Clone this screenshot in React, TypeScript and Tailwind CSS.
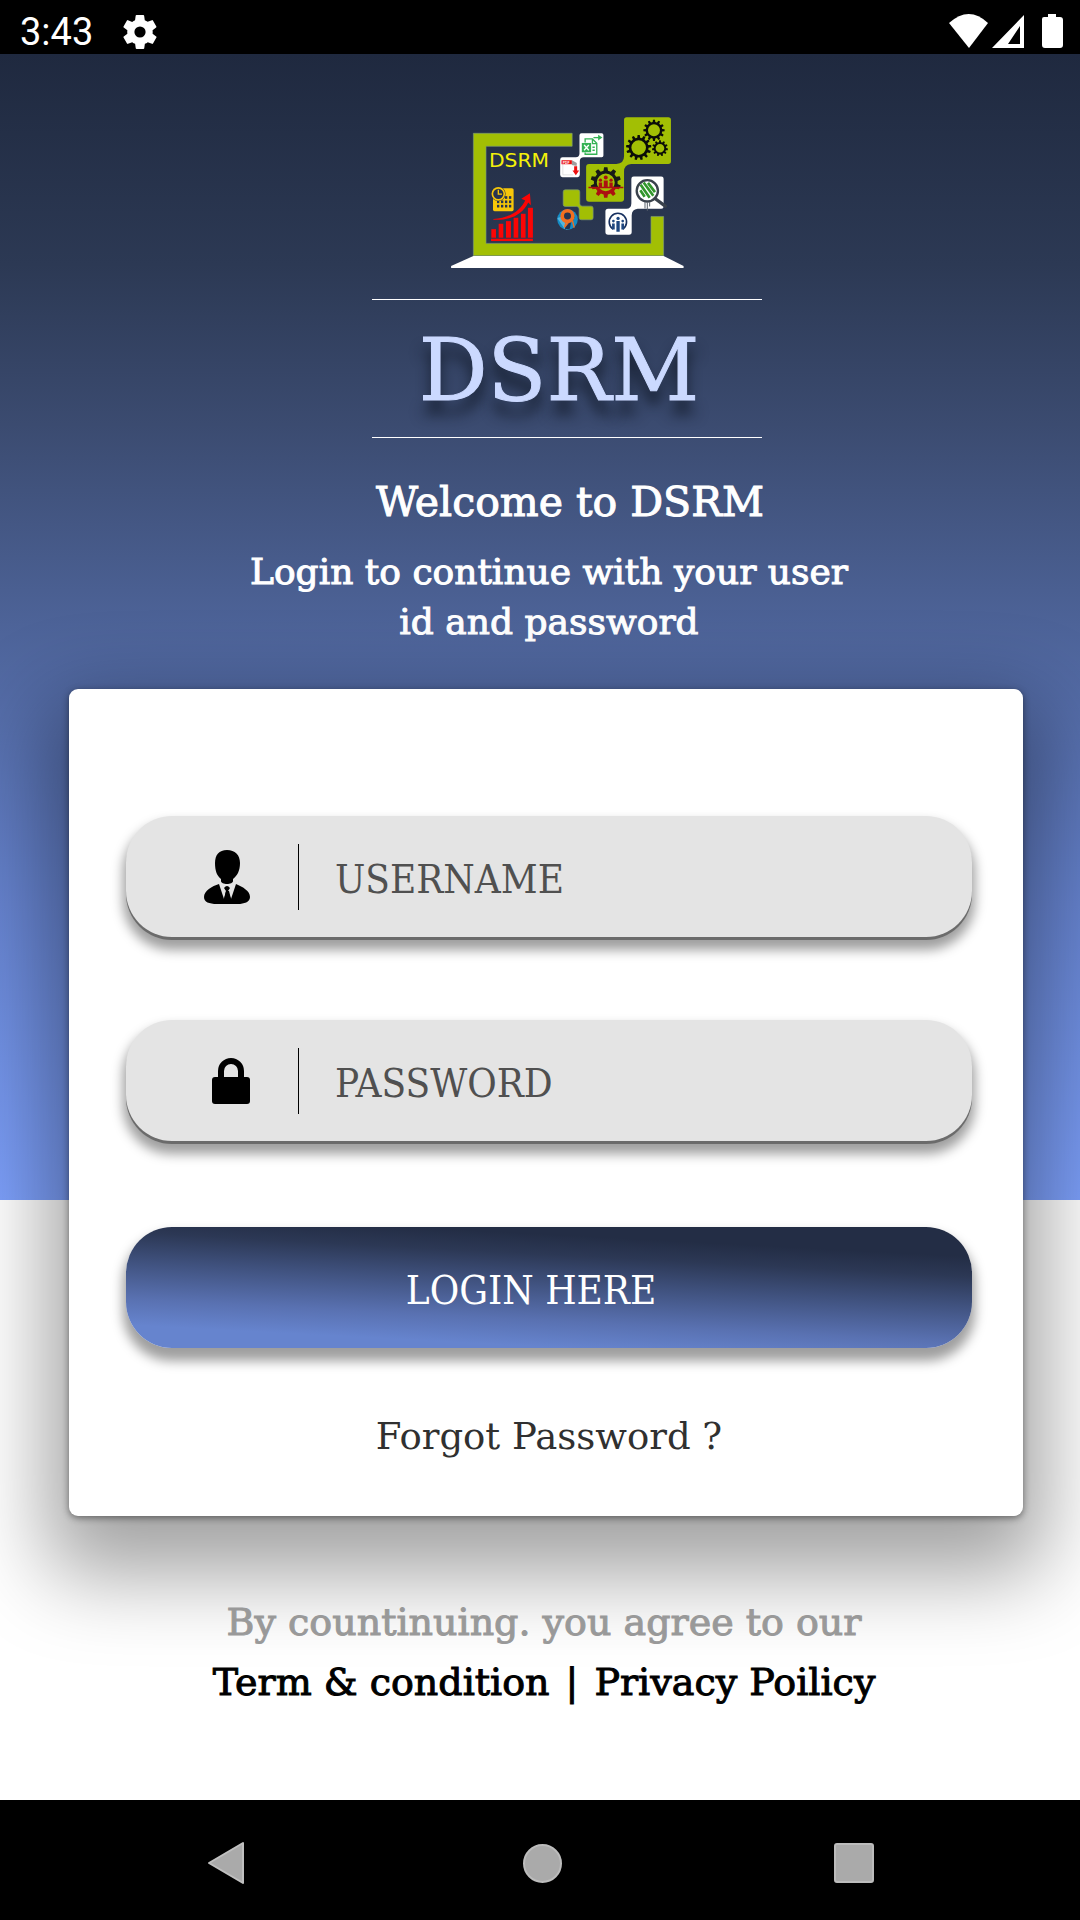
import type { ReactNode } from "react";

function Gear({ x, y, r, teeth, color, hole }: { x: number; y: number; r: number; teeth: number; color: string; hole: number }) {
  const points: string[] = [];
  for (let i = 0; i < teeth; i++) {
    const step = (Math.PI * 2) / teeth;
    const a = i * step - Math.PI / 2;
    const corners: [number, number][] = [
      [-0.3, 0.78],
      [-0.18, 1],
      [0.18, 1],
      [0.3, 0.78],
    ];
    corners.forEach(([offset, k]) => {
      const t = a + offset * step;
      points.push(`${(x + Math.cos(t) * r * k).toFixed(1)} ${(y + Math.sin(t) * r * k).toFixed(1)}`);
    });
  }
  const d = `M${points.join("L")}ZM${x - hole} ${y}a${hole} ${hole} 0 1 0 ${hole * 2} 0a${hole} ${hole} 0 1 0 ${-hole * 2} 0Z`;
  return <path d={d} fill={color} fillRule="evenodd" />;
}

function Logo() {
  return (
    <svg viewBox="33 50 700 454" className="h-[151px] w-[233px]" role="img" aria-label="DSRM laptop logo">
      {/* laptop frame */}
      <path d="M100 99H397V138H138V430H634V349H672V467H100Z" fill="#a2bf04" stroke="#7b9c78" strokeWidth="2" />
      <path d="M100 468H672L732 498V504H33V498Z" fill="#fff" />
      <text x="147" y="199" fontSize="61" fill="#f4f00a" fontFamily="'DejaVu Sans'">DSRM</text>

      {/* calendar with clock */}
      <rect x="159" y="264" width="62" height="69" rx="5" fill="#f7c709" />
      {[288, 301, 314].map((y) =>
        [171, 183, 195, 207].map((x) => <rect key={`${x}-${y}`} x={x} y={y} width="7" height="8" fill="#263450" />),
      )}
      <circle cx="175" cy="281" r="22" fill="#263450" />
      <circle cx="175" cy="281" r="18" fill="none" stroke="#f7c709" strokeWidth="5" />
      <path d="M175 269V282H186" fill="none" stroke="#f7c709" strokeWidth="4" />

      {/* bar chart */}
      <g fill="#fb0505">
        <rect x="154" y="387" width="14" height="26" />
        <rect x="176" y="371" width="14" height="42" />
        <rect x="198" y="363" width="15" height="50" />
        <rect x="221" y="353" width="14" height="60" />
        <rect x="243" y="341" width="14" height="72" />
        <rect x="264" y="323" width="15" height="90" />
        <rect x="153" y="416" width="126" height="7" />
        <path d="M160 357C205 354 239 335 256 301L244 296L270 279L273 315L265 307C245 347 208 361 160 359Z" />
      </g>

      {/* spreadsheet and document tiles */}
      <path d="M425 99H486Q491 99 491 104V166Q491 171 486 171H432Q420 171 420 183V224Q420 231 413 231H368Q361 231 361 224V178Q361 171 368 171H408Q419 171 419 160V105Q419 99 425 99Z" fill="#fff" />
      <g fill="none" stroke="#35b254" strokeWidth="4">
        <path d="M436 127V116H458L471 129V162H436V157" />
        <path d="M458 116V130H471M458 141H465M458 150H465" />
        <path d="M461 112H480" />
      </g>
      <path d="M475 103L488 112L475 121Z" fill="#35b254" />
      <rect x="426" y="128" width="28" height="28" fill="#35b254" />
      <path d="M433 134L447 150M447 134L433 150" stroke="#fff" strokeWidth="4" />
      <path d="M369 183V224H400M397 181L410 190V203" fill="none" stroke="#d6d6d6" strokeWidth="2" />
      <path d="M396 180L411 188L410 197L396 194Z" fill="#9e9e9e" />
      <rect x="365" y="180" width="31" height="12" fill="#eb1010" />
      <text x="369" y="190" fontSize="10" fontWeight="700" fill="#fff" fontFamily="'Liberation Sans'">PDF</text>
      <path d="M403 198H412V211H418L408 225L398 211H403Z" fill="#ee1111" />

      {/* linked green tiles */}
      <path d="M561 51H686Q694 51 694 59V183Q694 191 686 191H574Q553 193 553 214V296Q553 305 544 305H448Q439 305 439 296V200Q439 191 448 191H530Q553 190 553 168V59Q553 51 561 51Z" fill="#a2bf04" />
      <Gear x={597} y={142} r={38} teeth={13} color="#0b0d08" hole={22} />
      <Gear x={643} y={90} r={32} teeth={12} color="#0b0d08" hole={18} />
      <Gear x={661} y={144} r={24} teeth={11} color="#0b0d08" hole={13} />

      <svg x="448" y="200" width="105" height="62" viewBox="448 200 105 62">
        <Gear x={498} y={247} r={46} teeth={10} color="#171918" hole={27} />
      </svg>
      <svg x="445" y="262" width="108" height="34" viewBox="445 257 108 34">
        <Gear x={498} y={244} r={44} teeth={10} color="#ac1010" hole={24} />
      </svg>
      <path d="M446 262H551" stroke="#ac1010" strokeWidth="4" />
      <g fill="#ac1010">
        <circle cx="482" cy="240" r="5" />
        <circle cx="498" cy="232" r="6" />
        <circle cx="514" cy="240" r="5" />
        <path d="M477 247H487V262H477ZM492 241H504V262H492ZM509 247H519V262H509Z" />
      </g>

      {/* small green tiles */}
      <path d="M376 269H414Q420 269 420 275V311Q420 318 427 318H454Q460 318 460 324V353Q460 359 454 359H425Q418 359 418 353V327Q418 319 410 319H376Q370 319 370 313V275Q370 269 376 269Z" fill="#a2bf04" stroke="#7b9c78" strokeWidth="2" />

      {/* map pin badge */}
      <circle cx="383" cy="358" r="31" fill="#148bc5" />
      <path d="M352 354L374 386L382 390L386 344Z" fill="#53b5dd" />
      <path d="M376 388C374 377 382 374 382 368A19 19 0 1 1 394 366L390 386Z" fill="#233452" />
      <circle cx="383" cy="348" r="16" fill="none" stroke="#f26f20" strokeWidth="11" />
      <path d="M379 365L374 382L386 367M398 362L403 383" fill="none" stroke="#f26f20" strokeWidth="4" />

      {/* white tiles */}
      <path d="M582 229H665Q672 229 672 236V319Q672 326 665 326H594Q576 328 576 346V396Q576 404 568 404H505Q497 404 497 396V334Q497 326 505 326H560Q575 325 575 309V236Q575 229 582 229Z" fill="#fff" />
      <circle cx="623" cy="272" r="32" fill="#fff" stroke="#3a424c" strokeWidth="7" />
      <path d="M603 254L630 293M612 247L641 287M625 248L646 276M602 270L615 290" stroke="#32962c" strokeWidth="8" />
      <path d="M646 295L677 318" stroke="#3a424c" strokeWidth="10" strokeLinecap="round" />
      <path d="M616 306V325M623 306V332M630 306V319" stroke="#59616b" strokeWidth="3" />
      <path d="M520 387A26 26 0 1 1 549 387" fill="none" stroke="#17305f" strokeWidth="5" />
      <g fill="#1e467f">
        <circle cx="521" cy="363" r="4" />
        <circle cx="535" cy="355" r="5" />
        <circle cx="549" cy="363" r="4" />
        <path d="M517 370H525V388H517ZM530 363H540V395H530ZM545 370H553V388H545Z" />
      </g>
    </svg>
  );
}

function StatusBar() {
  return (
    <div className="flex h-[54px] items-center justify-between bg-black pr-4 pl-5 pt-2.5 text-white">
      <div className="flex items-center gap-[30px]">
        <span className="font-['Roboto'] text-[38px] leading-[46px]">3:43</span>
        <svg viewBox="2 2 20 20" className="size-[34px] fill-white" aria-hidden="true">
          <path d="M19.4 13c.04-.3.06-.64.06-1s-.02-.7-.07-1l2.1-1.65a.5.5 0 0 0 .12-.64l-2-3.46a.5.5 0 0 0-.6-.22l-2.5 1a7.6 7.6 0 0 0-1.7-.98l-.37-2.65A.5.5 0 0 0 13.95 2h-4a.5.5 0 0 0-.5.42L9.1 5.07c-.6.24-1.17.57-1.7.98l-2.48-1a.5.5 0 0 0-.6.22l-2 3.46a.5.5 0 0 0 .12.64L4.57 11a7.7 7.7 0 0 0 0 2l-2.12 1.65a.5.5 0 0 0-.12.64l2 3.46c.13.22.4.3.6.22l2.5-1c.52.4 1.08.73 1.7.98l.37 2.65c.04.24.25.4.5.4h4c.25 0 .46-.16.5-.4l.37-2.65a7.3 7.3 0 0 0 1.7-.98l2.48 1c.23.08.48 0 .6-.22l2-3.46a.5.5 0 0 0-.12-.64ZM12 15.3a3.3 3.3 0 1 1 0-6.6 3.3 3.3 0 0 1 0 6.6Z" fillRule="evenodd" />
        </svg>
      </div>
      <svg viewBox="0 0 115 36" className="h-[36px] w-[115px] fill-white" aria-hidden="true">
        <path d="M0 9Q20-9 39 9L20 34Z" />
        <path d="M75 1V34H43ZM71 12L59 30H71Z" fillRule="evenodd" />
        <path d="M93 5Q93 3 95 3H99V0H107V3H111Q114 3 114 6V31Q114 34 111 34H96Q93 34 93 31Z" />
      </svg>
    </div>
  );
}

function Field({ id, type, label, icon }: { id: string; type: string; label: string; icon: ReactNode }) {
  return (
    <div className="flex h-[121px] items-center rounded-[46px] bg-[#e4e4e4] shadow-[0_3px_0_#6b6b6b,0_10px_12px_3px_rgba(0,0,0,0.38)]">
      <label htmlFor={id} className="flex w-[124px] shrink-0 justify-end" aria-label={label}>
        {icon}
      </label>
      <span className="ml-12 h-[66px] w-px shrink-0 bg-black" />
      <input
        id={id}
        type={type}
        placeholder={label}
        className="ml-9 h-16 min-w-0 flex-1 bg-transparent pt-1 pr-10 text-[40px] text-[#505050] outline-none placeholder:text-[#505050] placeholder:opacity-100"
      />
    </div>
  );
}

export default function App() {
  return (
    <div className="flex min-h-screen flex-col bg-white font-['DejaVu_Serif_Condensed','DejaVu_Serif',serif]">
      <StatusBar />

      <main className="flex flex-1 flex-col bg-[linear-gradient(180deg,#1f293f_0px,#2c3954_210px,#3b4b70_370px,#4d6398_570px,#6683cf_850px,#7da0fb_1146px)] bg-[length:100%_1146px] bg-no-repeat">
        <header className="flex flex-col items-center pt-[63px] text-center font-['DejaVu_Serif',serif] text-white [-webkit-text-stroke:1px_currentColor]">
          <div className="ml-[54px] flex w-[390px] flex-col items-center">
            <Logo />
            <h1 className="mt-[31px] w-full border-y border-white pt-1 pr-4 text-[86px] leading-[133px] text-[#cbd9ff] [text-shadow:0_14px_14px_rgba(17,24,39,0.9)]">
              DSRM
            </h1>
          </div>
          <h2 className="mt-[34px] ml-[60px] text-[41px] leading-[60px]">Welcome to DSRM</h2>
          <p className="mt-[15px] ml-[18px] w-[610px] text-[36px] leading-[50px]">
            Login to continue with your user id and password
          </p>
        </header>

        <form
          onSubmit={(e) => e.preventDefault()}
          className="mt-[42px] mr-[57px] ml-[69px] flex flex-col rounded-[9px] bg-white pt-[127px] pr-[51px] pb-[49px] pl-[57px] shadow-[0_2px_7px_rgba(0,0,0,0.45),0_36px_84px_22px_rgba(0,0,0,0.37)]"
        >
          <Field
            id="username"
            type="text"
            label="USERNAME"
            icon={
              <svg viewBox="0 0 46 54" className="h-[54px] w-[46px]" aria-hidden="true">
                <path d="M23 0C31 0 36 5 36 13C36 21 33 26 29 29V31C29 35 17 35 17 31V29C13 26 11 21 11 13C11 5 15 0 23 0ZM15 34L20 49L22 41L20 38Q23 34 26 38L24 41L27 49L32 34C39 37 46 41 46 47C46 52 40 54 34 54H13C5 54 0 52 0 47C0 41 8 36 15 34Z" />
                <path d="M22 41H25L27 49L24 51L20 49Z" />
              </svg>
            }
          />
          <div className="h-[83px]" />
          <Field
            id="password"
            type="password"
            label="PASSWORD"
            icon={
              <svg viewBox="0 0 38 46" className="h-[46px] w-[38px]" aria-hidden="true">
                <path d="M9 22V13A10 10 0 0 1 29 13V22" fill="none" stroke="#000" strokeWidth="6" />
                <rect y="19" width="38" height="27" rx="3" />
              </svg>
            }
          />
          <button
            type="submit"
            className="mt-[86px] h-[121px] rounded-[46px] bg-[linear-gradient(183deg,#232d45_18%,#2c3855_30%,#40527f_48%,#5971b1_70%,#6684ce_86%)] pt-1 pr-9 text-[40px] text-white shadow-[0_10px_12px_3px_rgba(0,0,0,0.38)]"
          >
            LOGIN HERE
          </button>
          <a href="#forgot" className="mt-[59px] self-center font-['DejaVu_Serif',serif] text-[37px] leading-[60px] text-[#303030]">
            Forgot Password ?
          </a>
        </form>

        <footer className="mt-[76px] flex flex-col items-center pb-[70px] pl-2 font-['DejaVu_Serif',serif] text-[38px] leading-[60px] [-webkit-text-stroke:1px_currentColor]">
          <p className="text-[#999]">By countinuing. you agree to our</p>
          <p className="flex gap-4 text-black">
            <a href="#terms">Term &amp; condition</a>
            <span>|</span>
            <a href="#privacy">Privacy Poilicy</a>
          </p>
        </footer>
      </main>

      <nav className="flex h-[120px] items-center justify-between bg-black pt-1.5 pr-[206px] pl-[207px]">
        <button type="button" aria-label="Back" className="w-[43px]">
          <svg viewBox="0 0 38 44" className="h-[44px] w-[38px]">
            <path d="M36 2V42L2 22Z" fill="#aaa" stroke="#c0c0c0" strokeWidth="2" strokeLinejoin="round" />
          </svg>
        </button>
        <button type="button" aria-label="Home" className="size-[39px] rounded-full border-2 border-[#bcbcbc] bg-[#aaa]" />
        <button type="button" aria-label="Recent apps" className="size-[40px] rounded-[3px] border-2 border-[#bcbcbc] bg-[#aaa]" />
      </nav>
    </div>
  );
}
